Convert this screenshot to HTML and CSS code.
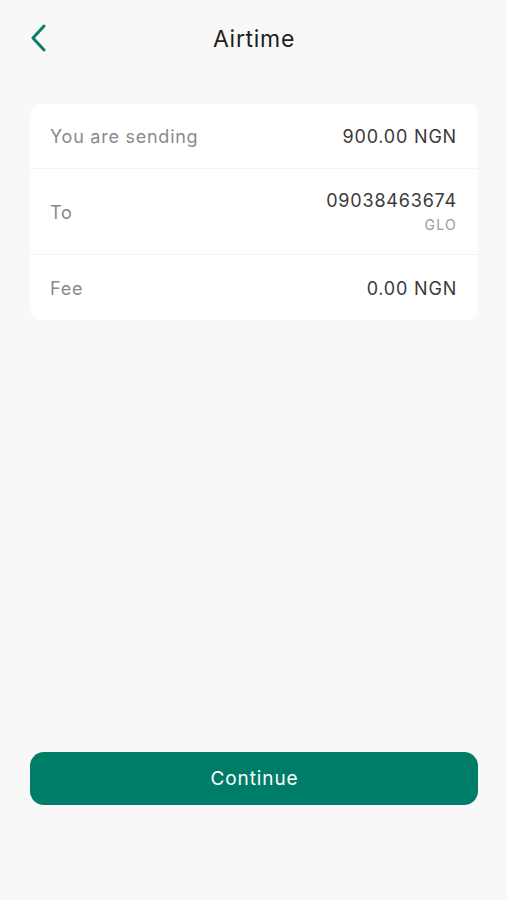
FILE: index.html
```html
<!DOCTYPE html>
<html>
<head>
<meta charset="utf-8">
<link rel="stylesheet" href="styles.css">
</head>
<body>
<div class="screen">
  <header class="topbar">
    <button class="back" aria-label="Back">
      <svg width="18" height="28" viewBox="0 0 18 28"><path d="M14 2 L3 14 L14 26" fill="none" stroke="#0b7f66" stroke-width="3" stroke-linecap="round" stroke-linejoin="round"/></svg>
    </button>
    <h1 class="title">Airtime</h1>
  </header>
  <section class="card">
    <div class="row r1">
      <span class="label">You are sending</span>
      <span class="value">900.00 NGN</span>
    </div>
    <div class="row r2">
      <span class="label">To</span>
      <span class="valuebox">
        <span class="value">09038463674</span>
        <span class="sub">GLO</span>
      </span>
    </div>
    <div class="row r3">
      <span class="label">Fee</span>
      <span class="value">0.00 NGN</span>
    </div>
  </section>
  <div class="spacer"></div>
  <button class="continue">Continue</button>
</div>
</body>
</html>
```
FILE: styles.css
```css
* { box-sizing: border-box; }
html, body { margin: 0; padding: 0; }
body {
  background: #f8f8f8;
  font-family: Inter, "Noto Sans", sans-serif;
  width: 507px;
  height: 900px;
}
.screen {
  display: flex;
  flex-direction: column;
  height: 900px;
  padding: 0 29px 0 30px;
}
.topbar {
  position: relative;
  height: 78px;
  display: flex;
  align-items: center;
  justify-content: center;
}
.back {
  position: absolute;
  left: 0;
  top: 24px;
  background: none;
  border: 0;
  padding: 0;
  width: 18px;
  height: 28px;
}
.back svg { display: block; }
.title {
  margin: 0;
  font-weight: 400;
  font-size: 23px;
  color: #1e1e1e;
  letter-spacing: 0.7px;
}
.card {
  margin-top: 26px;
  background: #fff;
  border-radius: 10px;
  display: flex;
  flex-direction: column;
}
.row {
  display: flex;
  justify-content: space-between;
  align-items: center;
  padding: 0 21px 0 20px;
  border-bottom: 1px solid #f3f3f3;
}
.row:last-child { border-bottom: 0; }
.r1 { height: 65px; }
.r2 { height: 86px; }
.r3 { height: 65px; }
.label {
  font-size: 18px;
  color: #8a8a8a;
  letter-spacing: 0.75px;
  margin-top: 1px;
}
.value {
  font-size: 18px;
  color: #3a3a3a;
  letter-spacing: 0.8px;
  margin-top: 1px;
}
.valuebox {
  display: flex;
  flex-direction: column;
  align-items: flex-end;
  margin-top: -2px;
}
.sub {
  font-size: 14px;
  color: #9a9a9a;
  letter-spacing: 1.3px;
  margin-top: 5px;
}
.spacer { flex: 1; }
.continue {
  margin-bottom: 95px;
  height: 53px;
  border: 0;
  border-radius: 14px;
  background: #007d68;
  color: #fff;
  font-family: Inter, "Noto Sans", sans-serif;
  font-size: 19px;
  letter-spacing: 0.9px;
  width: 448px;
  padding: 0 0 0 1px;
}
```
